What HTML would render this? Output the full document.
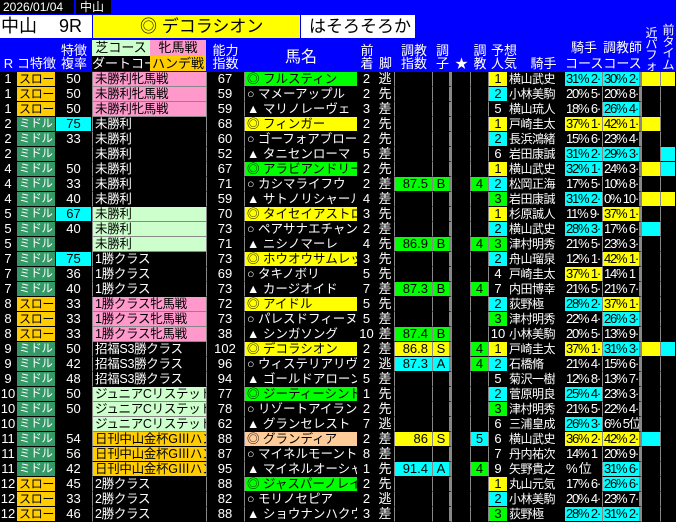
<!DOCTYPE html>
<html><head><meta charset="utf-8">
<style>
*{margin:0;padding:0;box-sizing:border-box}
body{width:676px;height:522px;background:#0000ff;position:relative;overflow:hidden;font-family:"Liberation Sans","Noto Sans CJK JP",sans-serif;color:#fff}
.a{position:absolute;white-space:nowrap}
.h{font-size:13px;line-height:13px;color:#fff;text-align:center}
table{position:absolute;left:0;top:72px;width:676px;table-layout:fixed;border-collapse:separate;border-spacing:0;background:#000;font-size:13px}
td{height:15px;line-height:14px;border-right:1px solid #000;border-bottom:1px solid #000;overflow:hidden;white-space:nowrap;color:#fff;padding:0;text-align:center}
td:nth-child(4){text-align:left;padding-left:2px;border-left:1px solid #888;border-right:1px solid #888;font-size:12.5px;letter-spacing:-0.3px}
td:nth-child(6){text-align:left;padding-left:2px;border-left:1px solid #888;font-size:12.5px}
td:nth-child(2){text-align:left;padding-left:2px;font-size:12px;letter-spacing:-0.3px}
td:nth-child(8),td:nth-child(9),td:nth-child(11),td:nth-child(12),td:nth-child(15),td:nth-child(17){border-right:1px solid #888}
td:nth-child(10){border-right:3px solid #888}
td:nth-child(16){border-right:3px solid #888}
td:nth-child(9){text-align:right;padding-right:4px}
td:nth-child(14){text-align:left;padding-left:1px;font-size:12px;letter-spacing:-0.5px}
td:nth-child(15),td:nth-child(16){text-align:left;padding-left:1px;font-size:13px;letter-spacing:-1.2px}
.o{background:#ffcc00;color:#000}
.p{background:#ff99cc;color:#000;border-bottom-color:#888!important}
.lg{background:#ccffcc;color:#000;border-bottom-color:#888!important}
.g{background:#00ff00;color:#000}
.y{background:#ffff00;color:#000}
.c{background:#00ffff;color:#000}
.pe{background:#ffcc99;color:#000}
.m{background:#339966;color:#fff;font-size:11.5px!important}
</style></head><body>
<div class="a" style="left:0;top:0;width:74px;height:14px;background:#000;font-size:12px;line-height:14px;padding-left:3px">2026/01/04</div>
<div class="a" style="left:76px;top:0;width:35px;height:14px;background:#000;font-size:12px;line-height:14px;padding-left:4px">中山</div>
<div class="a" style="left:0;top:15px;width:92px;height:23px;background:#fff;color:#000;font-size:18px;line-height:23px;padding-left:1px">中山<span style="margin-left:22px">9R</span></div>
<div class="a" style="left:93px;top:15px;width:207px;height:23px;background:#ffff00;color:#000;font-size:17px;line-height:23px;padding-left:47px">◎ デコラシオン</div>
<div class="a" style="left:301px;top:15px;width:114px;height:23px;background:#fff;color:#000;font-size:17px;line-height:23px;padding-left:8px">はそろそろか</div>

<div class="a h" style="left:0;top:57px;width:17px">R</div>
<div class="a h" style="left:17px;top:57px;width:39px">コ特徴</div>
<div class="a h" style="left:56px;top:44px;width:36px">特徴<br>複率</div>
<div class="a" style="left:92px;top:40px;width:58px;height:16px;background:#ccffcc;color:#000;font-size:13px;line-height:16px;text-align:center">芝コース</div>
<div class="a" style="left:150px;top:40px;width:56px;height:16px;background:#ff99cc;color:#000;font-size:13px;line-height:16px;text-align:center">牝馬戦</div>
<div class="a" style="left:92px;top:56px;width:58px;height:15px;background:#000;color:#fff;font-size:13px;line-height:15px;overflow:hidden">ダートコー.</div>
<div class="a" style="left:150px;top:56px;width:56px;height:15px;background:#ffcc00;color:#000;font-size:13px;line-height:15px;text-align:center">ハンデ戦</div>
<div class="a h" style="left:207px;top:44px;width:37px">能力<br>指数</div>
<div class="a h" style="left:244px;top:50px;width:114px;font-size:16px;line-height:16px">馬名</div>
<div class="a h" style="left:358px;top:44px;width:18px">前<br>着</div>
<div class="a h" style="left:376px;top:57px;width:19px">脚</div>
<div class="a h" style="left:395px;top:44px;width:38px">調教<br>指数</div>
<div class="a h" style="left:433px;top:44px;width:19px">調<br>子</div>
<div class="a h" style="left:452px;top:57px;width:19px">★</div>
<div class="a h" style="left:471px;top:44px;width:18px">調<br>教</div>
<div class="a h" style="left:486px;top:44px;width:36px">予想<br>人気</div>
<div class="a h" style="left:522px;top:57px;width:43px">騎手</div>
<div class="a h" style="left:565px;top:41px;width:38px">騎手</div>
<div class="a h" style="left:565px;top:57px;width:38px;overflow:hidden">コース:</div>
<div class="a h" style="left:603px;top:41px;width:39px">調教師</div>
<div class="a h" style="left:603px;top:57px;width:39px;overflow:hidden">コース</div>
<div class="a h" style="left:642px;top:28px;width:19px;font-size:12px;line-height:11px">近<br>パ<br>フ<br>ォ</div>
<div class="a h" style="left:661px;top:25px;width:15px;font-size:12px;line-height:11.5px">前<br>タ<br>イ<br>ム</div>

<table>
<colgroup><col style="width:17px"><col style="width:39px"><col style="width:36px"><col style="width:115px"><col style="width:37px"><col style="width:114px"><col style="width:18px"><col style="width:19px"><col style="width:38px"><col style="width:19px"><col style="width:19px"><col style="width:18px"><col style="width:19px"><col style="width:57px"><col style="width:38px"><col style="width:39px"><col style="width:19px"><col style="width:15px"></colgroup>
<tr><td>1</td><td class="o">スロー</td><td>50</td><td class="p">未勝利牝馬戦</td><td>67</td><td class="g">◎ フルスティン</td><td>2</td><td>逃</td><td></td><td></td><td></td><td></td><td class="y">1</td><td>横山武史</td><td class="c">31% 2·</td><td class="c">30% 2·</td><td class="y"></td><td class="y"></td></tr>
<tr><td>1</td><td class="o">スロー</td><td>50</td><td class="p">未勝利牝馬戦</td><td>59</td><td>○ マメーアップル</td><td>2</td><td>先</td><td></td><td></td><td></td><td></td><td class="c">2</td><td>小林美駒</td><td>20% 5·</td><td>20% 8·</td><td></td><td></td></tr>
<tr><td>1</td><td class="o">スロー</td><td>50</td><td class="p">未勝利牝馬戦</td><td>59</td><td>▲ マリノレーヴェ</td><td>3</td><td>差</td><td></td><td></td><td></td><td></td><td>5</td><td>横山琉人</td><td>18% 6·</td><td class="c">26% 4·</td><td></td><td></td></tr>
<tr><td>2</td><td class="m">ミドル</td><td class="c">75</td><td>未勝利</td><td>68</td><td class="y">◎ フィンガー</td><td>2</td><td>先</td><td></td><td></td><td></td><td></td><td class="y">1</td><td>戸崎圭太</td><td class="y">37% 1·</td><td class="y">42% 1·</td><td class="y"></td><td></td></tr>
<tr><td>2</td><td class="m">ミドル</td><td>33</td><td>未勝利</td><td>60</td><td>○ ゴーフォアブローク</td><td>2</td><td>先</td><td></td><td></td><td></td><td></td><td class="c">2</td><td>長浜鴻緒</td><td>15% 6·</td><td>23% 4·</td><td></td><td></td></tr>
<tr><td>2</td><td class="m">ミドル</td><td></td><td>未勝利</td><td>52</td><td>▲ タニセンローマ</td><td>5</td><td>差</td><td></td><td></td><td></td><td></td><td>6</td><td>岩田康誠</td><td class="c">31% 2·</td><td class="c">29% 3·</td><td></td><td class="c"></td></tr>
<tr><td>4</td><td class="m">ミドル</td><td>50</td><td>未勝利</td><td>67</td><td class="g">◎ アラビアンドリーム</td><td>2</td><td>先</td><td></td><td></td><td></td><td></td><td class="y">1</td><td>横山武史</td><td class="c">32% 1·</td><td>24% 3·</td><td class="y"></td><td class="c"></td></tr>
<tr><td>4</td><td class="m">ミドル</td><td>33</td><td>未勝利</td><td>71</td><td>○ カシマライフウ</td><td>2</td><td>差</td><td class="g">87.5</td><td class="g">B</td><td></td><td class="g">4</td><td class="c">2</td><td>松岡正海</td><td>17% 5·</td><td>10% 8·</td><td></td><td></td></tr>
<tr><td>4</td><td class="m">ミドル</td><td>40</td><td>未勝利</td><td>59</td><td>▲ サトノリシャール</td><td>4</td><td>差</td><td></td><td></td><td></td><td></td><td class="g">3</td><td>岩田康誠</td><td class="c">31% 2·</td><td>0% 10·</td><td class="y"></td><td class="y"></td></tr>
<tr><td>5</td><td class="m">ミドル</td><td class="c">67</td><td class="lg">未勝利</td><td>70</td><td class="y">◎ タイセイアストロ</td><td>3</td><td>先</td><td></td><td></td><td></td><td></td><td class="y">1</td><td>杉原誠人</td><td>11% 9·</td><td class="y">37% 1·</td><td></td><td></td></tr>
<tr><td>5</td><td class="m">ミドル</td><td>40</td><td class="lg">未勝利</td><td>73</td><td>○ ペアサナエチャン</td><td>2</td><td>差</td><td></td><td></td><td></td><td></td><td class="c">2</td><td>横山武史</td><td class="c">28% 3·</td><td>17% 6·</td><td class="c"></td><td></td></tr>
<tr><td>5</td><td class="m">ミドル</td><td></td><td class="lg">未勝利</td><td>71</td><td>▲ ニシノマーレ</td><td>4</td><td>先</td><td class="g">86.9</td><td class="g">B</td><td></td><td class="g">4</td><td class="g">3</td><td>津村明秀</td><td>21% 5·</td><td>23% 3·</td><td></td><td></td></tr>
<tr><td>7</td><td class="m">ミドル</td><td class="c">75</td><td>1勝クラス</td><td>73</td><td class="y">◎ ホウオウサムレット</td><td>3</td><td>先</td><td></td><td></td><td></td><td></td><td class="c">2</td><td>舟山瑠泉</td><td>12% 1·</td><td class="y">42% 1·</td><td></td><td></td></tr>
<tr><td>7</td><td class="m">ミドル</td><td>36</td><td>1勝クラス</td><td>69</td><td>○ タキノボリ</td><td>5</td><td>先</td><td></td><td></td><td></td><td></td><td>4</td><td>戸崎圭太</td><td class="y">37% 1·</td><td>14% 1</td><td></td><td></td></tr>
<tr><td>7</td><td class="m">ミドル</td><td>40</td><td>1勝クラス</td><td>73</td><td>▲ カージオイド</td><td>7</td><td>差</td><td class="g">87.3</td><td class="g">B</td><td></td><td class="g">4</td><td>7</td><td>内田博幸</td><td>21% 5·</td><td>21% 7·</td><td></td><td></td></tr>
<tr><td>8</td><td class="o">スロー</td><td>33</td><td class="p">1勝クラス牝馬戦</td><td>72</td><td class="y">◎ アイドル</td><td>5</td><td>先</td><td></td><td></td><td></td><td></td><td class="c">2</td><td>荻野極</td><td class="c">28% 2·</td><td class="y">37% 1·</td><td></td><td></td></tr>
<tr><td>8</td><td class="o">スロー</td><td>33</td><td class="p">1勝クラス牝馬戦</td><td>73</td><td>○ パレスドフィーヌ</td><td>5</td><td>差</td><td></td><td></td><td></td><td></td><td class="g">3</td><td>津村明秀</td><td>22% 4·</td><td class="c">26% 3·</td><td></td><td></td></tr>
<tr><td>8</td><td class="o">スロー</td><td>33</td><td class="p">1勝クラス牝馬戦</td><td>38</td><td>▲ シンガソング</td><td>10</td><td>差</td><td class="g">87.4</td><td class="g">B</td><td></td><td></td><td>10</td><td>小林美駒</td><td>20% 5·</td><td>13% 9·</td><td></td><td></td></tr>
<tr><td>9</td><td class="m">ミドル</td><td>50</td><td>招福S3勝クラス</td><td>102</td><td class="y">◎ デコラシオン</td><td>2</td><td>差</td><td class="y">86.8</td><td class="y">S</td><td></td><td class="g">4</td><td class="y">1</td><td>戸崎圭太</td><td class="y">37% 1·</td><td class="c">31% 3·</td><td class="y"></td><td class="c"></td></tr>
<tr><td>9</td><td class="m">ミドル</td><td>42</td><td>招福S3勝クラス</td><td>96</td><td>○ ウィステリアリヴァ</td><td>2</td><td>逃</td><td class="c">87.3</td><td class="c">A</td><td></td><td class="g">4</td><td class="c">2</td><td>石橋脩</td><td>21% 4·</td><td>15% 6·</td><td></td><td></td></tr>
<tr><td>9</td><td class="m">ミドル</td><td>48</td><td>招福S3勝クラス</td><td>94</td><td>▲ ゴールドアローン</td><td>5</td><td>差</td><td></td><td></td><td></td><td></td><td>5</td><td>菊沢一樹</td><td>12% 8·</td><td>13% 7·</td><td></td><td></td></tr>
<tr><td>10</td><td class="m">ミドル</td><td>50</td><td class="lg">ジュニアCリステッド</td><td>77</td><td class="g">◎ ジーティーシンドウ</td><td>1</td><td>先</td><td></td><td></td><td></td><td></td><td class="c">2</td><td>菅原明良</td><td class="c">25% 4·</td><td>23% 3·</td><td></td><td></td></tr>
<tr><td>10</td><td class="m">ミドル</td><td>50</td><td class="lg">ジュニアCリステッド</td><td>78</td><td>○ リゾートアイランド</td><td>2</td><td>先</td><td></td><td></td><td></td><td></td><td class="g">3</td><td>津村明秀</td><td>21% 5·</td><td>22% 4·</td><td></td><td></td></tr>
<tr><td>10</td><td class="m">ミドル</td><td></td><td class="lg">ジュニアCリステッド</td><td>62</td><td>▲ グランセレスト</td><td>7</td><td>逃</td><td></td><td></td><td></td><td></td><td>6</td><td>三浦皇成</td><td class="c">26% 3·</td><td>6% 5位</td><td></td><td></td></tr>
<tr><td>11</td><td class="m">ミドル</td><td>54</td><td class="o">日刊中山金杯GⅢハン</td><td>88</td><td class="pe">◎ グランディア</td><td>2</td><td>差</td><td class="y">86</td><td class="y">S</td><td></td><td class="c">5</td><td>6</td><td>横山武史</td><td class="y">36% 2·</td><td class="y">42% 2·</td><td class="c"></td><td></td></tr>
<tr><td>11</td><td class="m">ミドル</td><td>56</td><td class="o">日刊中山金杯GⅢハン</td><td>87</td><td>○ マイネルモーント</td><td>8</td><td>差</td><td></td><td></td><td></td><td></td><td>7</td><td>丹内祐次</td><td>14% 1</td><td>20% 9·</td><td></td><td></td></tr>
<tr><td>11</td><td class="m">ミドル</td><td>42</td><td class="o">日刊中山金杯GⅢハン</td><td>95</td><td>▲ マイネルオーシャン</td><td>1</td><td>先</td><td class="c">91.4</td><td class="c">A</td><td></td><td class="g">4</td><td>9</td><td>矢野貴之</td><td>% 位</td><td class="c">31% 6·</td><td></td><td></td></tr>
<tr><td>12</td><td class="o">スロー</td><td>45</td><td>2勝クラス</td><td>88</td><td class="g">◎ ジャスパーノレイコ</td><td>2</td><td>先</td><td></td><td></td><td></td><td></td><td class="y">1</td><td>丸山元気</td><td>17% 6·</td><td class="c">26% 6·</td><td></td><td></td></tr>
<tr><td>12</td><td class="o">スロー</td><td>33</td><td>2勝クラス</td><td>82</td><td>○ モリノセピア</td><td>2</td><td>逃</td><td></td><td></td><td></td><td></td><td class="c">2</td><td>小林美駒</td><td>20% 4·</td><td>23% 7·</td><td></td><td></td></tr>
<tr><td>12</td><td class="o">スロー</td><td>46</td><td>2勝クラス</td><td>88</td><td>▲ ショウナンハクウン</td><td>3</td><td>差</td><td></td><td></td><td></td><td></td><td class="g">3</td><td>荻野極</td><td class="c">28% 2·</td><td class="c">31% 2·</td><td></td><td></td></tr>
</table>
</body></html>
